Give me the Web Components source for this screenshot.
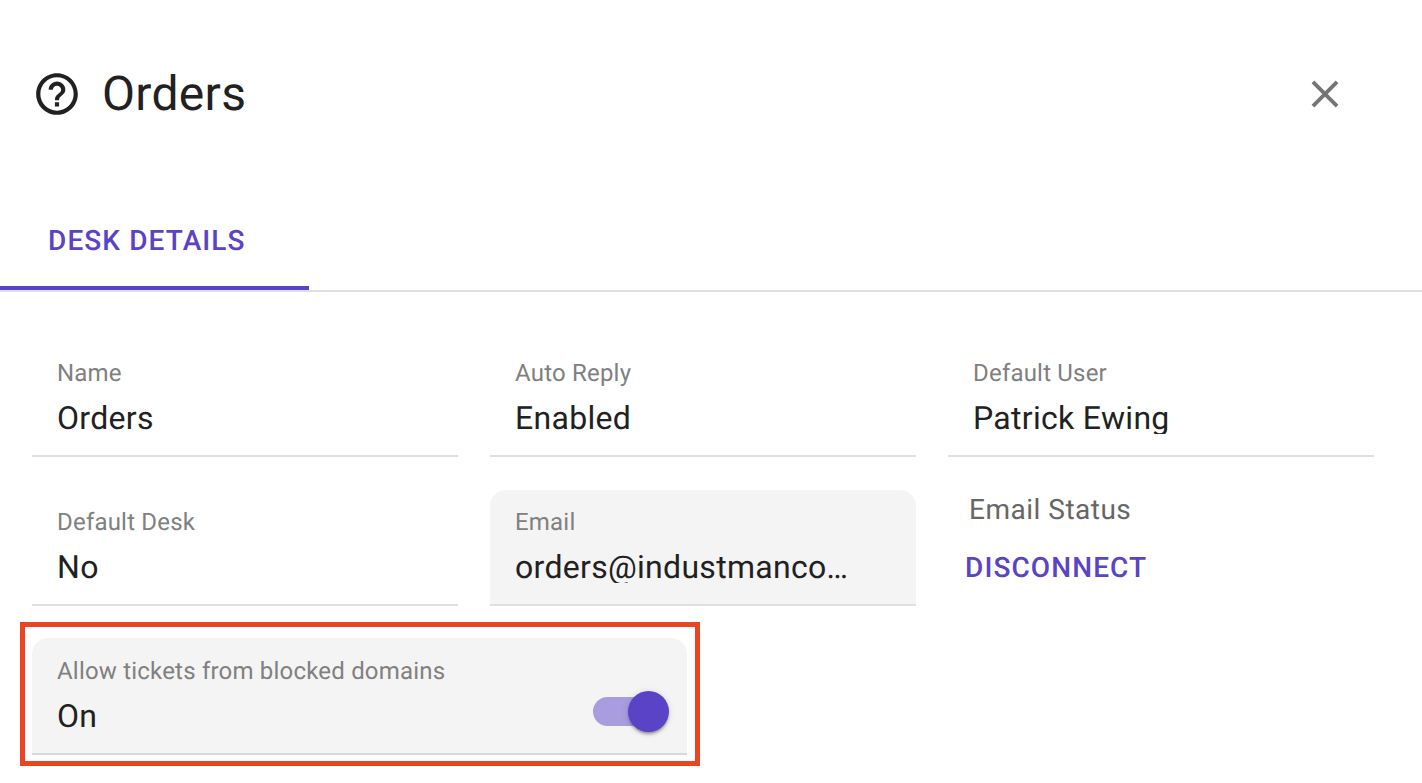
<!DOCTYPE html>
<html><head><meta charset="utf-8"><style>
html,body{margin:0;padding:0;background:#fff;font-family:Roboto,sans-serif;width:1422px;height:783px;overflow:hidden;text-rendering:geometricPrecision}
</style></head><body>
<desk-panel>
<desk-header title="Orders"></desk-header>
<desk-tabs label="DESK DETAILS"></desk-tabs>
<desk-grid>
<desk-field label="Name" value="Orders"></desk-field>
<desk-field label="Auto Reply" value="Enabled"></desk-field>
<desk-field label="Default User" value="Patrick Ewing" clip></desk-field>
<desk-field label="Default Desk" value="No"></desk-field>
<desk-field label="Email" value="orders@industmanco…" active clip></desk-field>
<email-status></email-status>
</desk-grid>
<toggle-field label="Allow tickets from blocked domains" value="On"></toggle-field>
</desk-panel>
<script>
function def(name,html,init){customElements.define(name,class extends HTMLElement{constructor(){super();const r=this.attachShadow({mode:'open'});r.innerHTML=html;}
connectedCallback(){if(init)init(this,this.shadowRoot)}})}
def('desk-panel',`<style>:host{display:block;width:1422px;height:783px;box-sizing:border-box;color:#212121}</style><slot></slot>`);
def('desk-header',`<style>:host{display:flex;align-items:center;height:188px;box-sizing:border-box;padding:0 74px 0 32px}
svg.h{width:50px;height:50px;display:block;flex:none}
h1{margin:0 0 0 20px;flex:1;font:400 48px/50px Roboto,sans-serif;letter-spacing:.3px;color:#212121}
svg.x{width:46px;height:46px;display:block;flex:none;fill:#757575}</style>
<svg class="h" viewBox="0 0 24 24" fill="#212121"><path d="M11 18h2v-2h-2v2zm1-16C6.48 2 2 6.48 2 12s4.48 10 10 10 10-4.48 10-10S17.52 2 12 2zm0 18c-4.41 0-8-3.59-8-8s3.59-8 8-8 8 3.59 8 8-3.59 8-8 8zm0-14c-2.21 0-4 1.79-4 4h2c0-1.1.9-2 2-2s2 .9 2 2c0 2-3 1.75-3 5h2c0-2.25 3-2.5 3-5 0-2.21-1.79-4-4-4z"/></svg>
<h1></h1>
<svg class="x" viewBox="0 0 24 24"><path d="M19 6.41 17.59 5 12 10.59 6.41 5 5 6.41 10.59 12 5 17.59 6.41 19 12 13.41 17.59 19 19 17.59 13.41 12z"/></svg>`,(e,r)=>{r.querySelector('h1').textContent=e.getAttribute('title')});
def('desk-tabs',`<style>:host{display:block;position:relative;height:104px;box-sizing:border-box;border-bottom:2px solid #e0e0e0}
div{width:309px;height:102px;box-sizing:border-box;border-bottom:4px solid #5a43c6;padding:8px 0 0 48px;margin-bottom:-2px;display:flex;align-items:center;font:500 28px/32px Roboto,sans-serif;color:#5a43c6;letter-spacing:1.1px}</style><div></div>`,(e,r)=>{r.querySelector('div').textContent=e.getAttribute('label')});
def('desk-grid',`<style>:host{display:grid;grid-template-columns:repeat(3,426px);column-gap:32px;row-gap:33px;padding:49px 0 0 32px}</style><slot></slot>`);
const bodyCss=`.l{font:400 24px/32px Roboto,sans-serif;letter-spacing:.2px;color:#808080;white-space:nowrap}
.v{font:400 32px/32px Roboto,sans-serif;letter-spacing:.3px;color:#212121;white-space:nowrap;margin-top:13px}`;
const fieldCss=`:host{display:block;height:116px;box-sizing:border-box;border-bottom:2px solid #e0e0e0;border-radius:16px 16px 0 0;padding:16px 25px 0;min-width:0}
:host([active]){background:#f4f4f4}
:host([clip]) .v{overflow:hidden}
${bodyCss}`;
const fill=(e,r)=>{r.querySelector('.l').textContent=e.getAttribute('label');r.querySelector('.v').textContent=e.getAttribute('value')};
def('desk-field',`<style>${fieldCss}</style><div class="l"></div><div class="v"></div>`,fill);
def('email-status',`<style>:host{display:block;height:116px;padding:0 0 0 21px;box-sizing:border-box}
.l{font:400 28px/36px Roboto,sans-serif;color:#666;margin-top:2px;letter-spacing:.5px}
.b{font:500 28px/36px Roboto,sans-serif;color:#5a43c6;margin:22px 0 0 -4px;letter-spacing:1.1px}</style><div class="l">Email Status</div><div class="b">DISCONNECT</div>`);
def('toggle-field',`<style>:host{display:block;position:relative;width:655px;height:117px;margin:32px 0 0 32px;box-sizing:border-box;background:#f4f4f4;border-bottom:2px solid #d9d9d9;border-radius:16px 16px 0 0;padding:17px 25px 0}
${bodyCss}
.mark{position:absolute;left:-12px;top:-16px;width:680px;height:144px;box-sizing:border-box;border:5px solid #ea4425;pointer-events:none}
.t{position:absolute;left:561px;top:59px;width:42px;height:29px;border-radius:15px 0 0 15px;background:#a99de0}
.k{position:absolute;left:596px;top:53px;width:41px;height:41px;border-radius:50%;background:#5a43c6;box-shadow:0 3px 3px -1px rgba(0,0,0,.35),0 1px 6px rgba(0,0,0,.15)}</style>
<div class="l"></div><div class="v"></div><div class="t"></div><div class="k"></div><div class="mark"></div>`,fill);
</script>
</body></html>
